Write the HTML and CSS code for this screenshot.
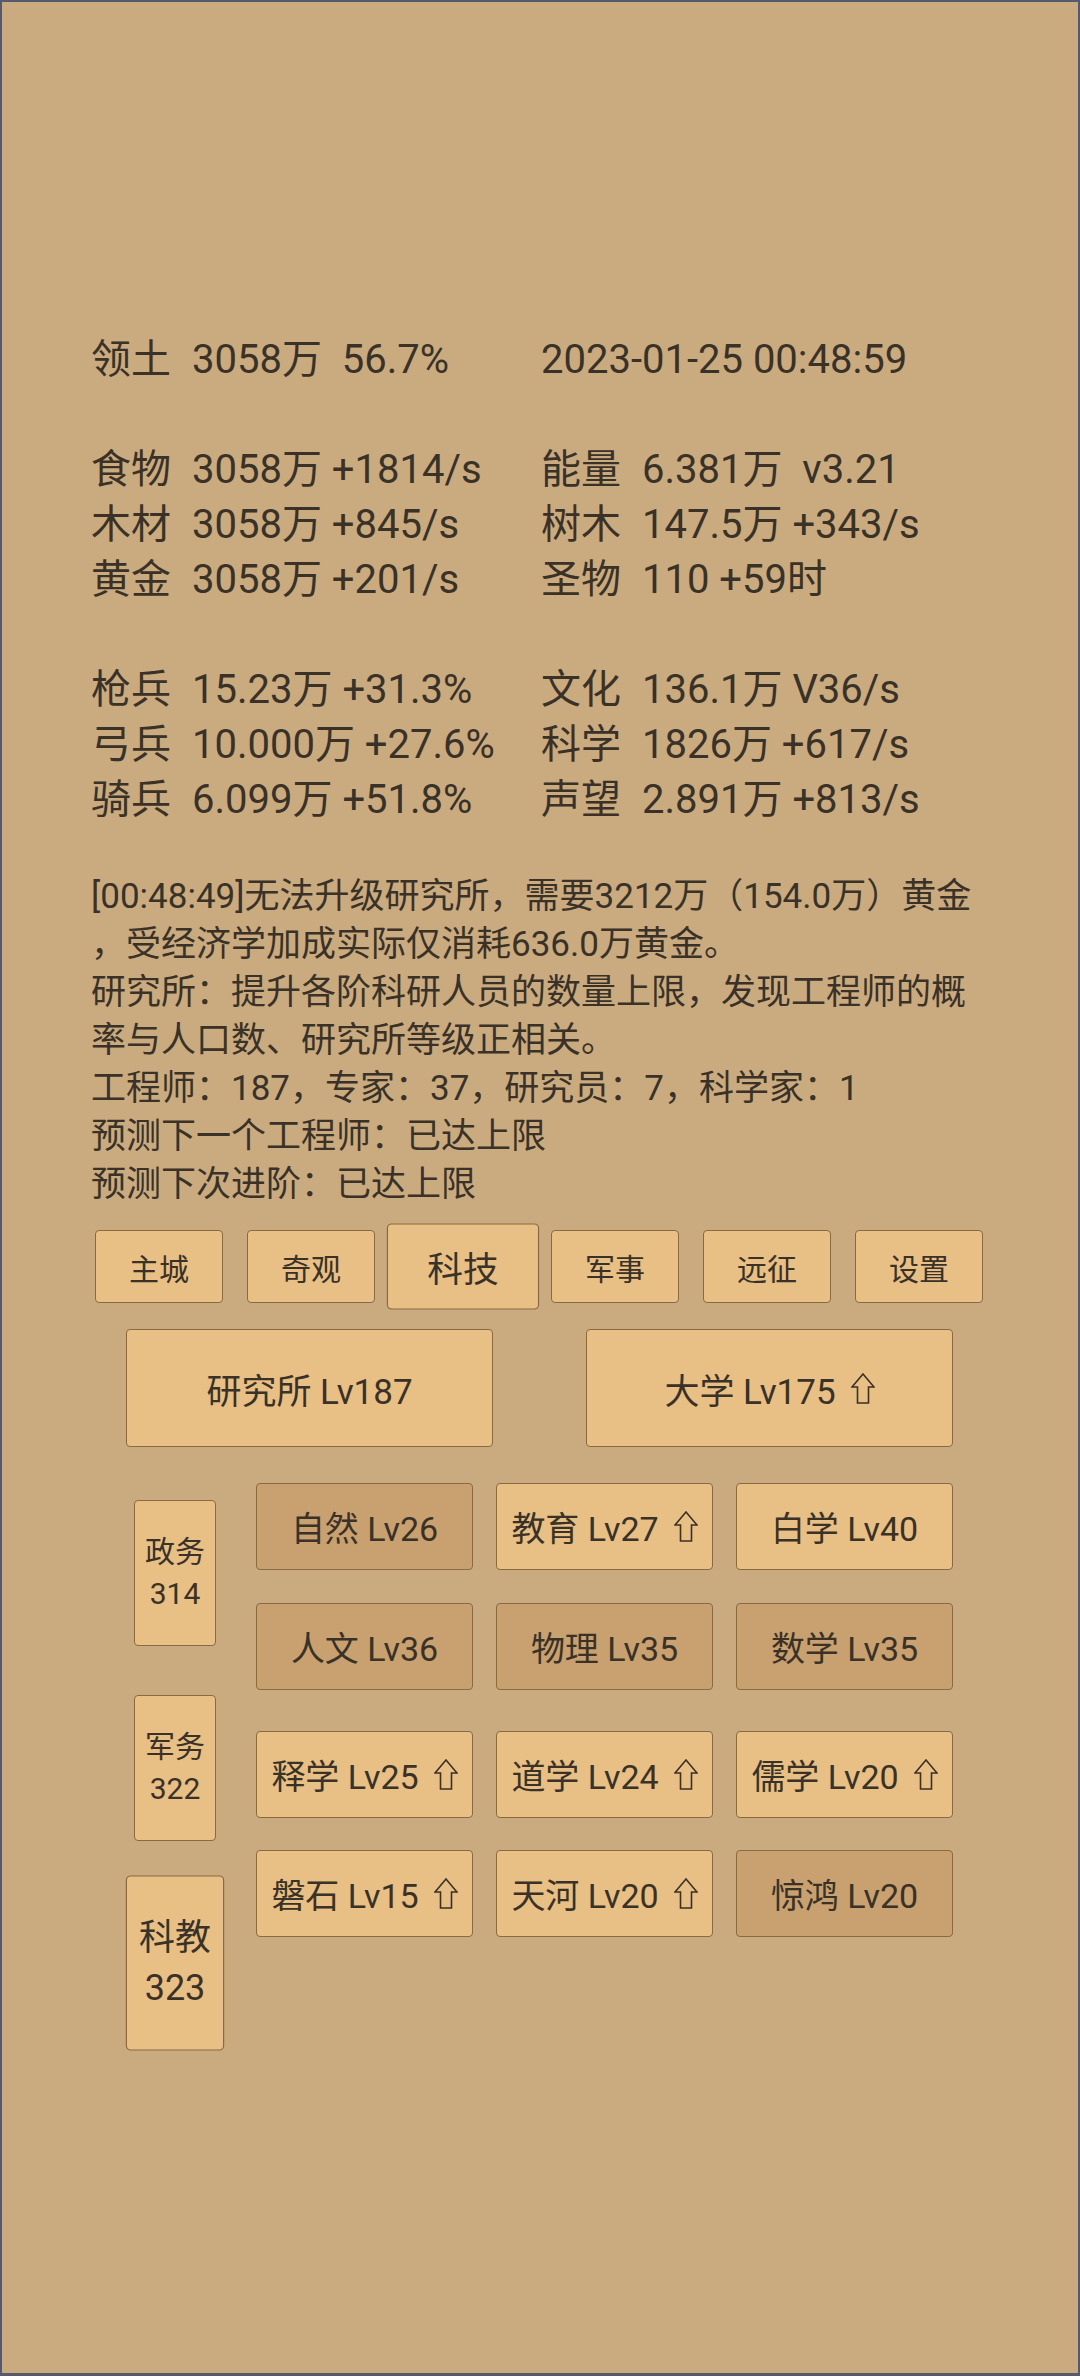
FILE: index.html
```html
<!DOCTYPE html>
<html lang="zh-CN">
<head>
<meta charset="utf-8">
<title>科技</title>
<link rel="stylesheet" href="styles.css">
</head>
<body>
<div class="page">
  <div class="stats">
    <span>领土</span><span>3058万  56.7%</span><span class="span2">2023-01-25 00:48:59</span>
    <span class="blank"></span>
    <span>食物</span><span>3058万 +1814/s</span><span>能量</span><span>6.381万  v3.21</span>
    <span>木材</span><span>3058万 +845/s</span><span>树木</span><span>147.5万 +343/s</span>
    <span>黄金</span><span>3058万 +201/s</span><span>圣物</span><span>110 +59时</span>
    <span class="blank"></span>
    <span>枪兵</span><span>15.23万 +31.3%</span><span>文化</span><span>136.1万 V36/s</span>
    <span>弓兵</span><span>10.000万 +27.6%</span><span>科学</span><span>1826万 +617/s</span>
    <span>骑兵</span><span>6.099万 +51.8%</span><span>声望</span><span>2.891万 +813/s</span>
  </div>

  <p class="log">[00:48:49]无法升级研究所，需要3212万（154.0万）黄金<br>，受经济学加成实际仅消耗636.0万黄金。<br>研究所：提升各阶科研人员的数量上限，发现工程师的概<br>率与人口数、研究所等级正相关。<br>工程师：187，专家：37，研究员：7，科学家：1<br>预测下一个工程师：已达上限<br>预测下次进阶：已达上限</p>

  <div class="nav">
    <div class="btn tab">主城</div>
    <div class="btn tab">奇观</div>
    <div class="btn tab active">科技</div>
    <div class="btn tab">军事</div>
    <div class="btn tab">远征</div>
    <div class="btn tab">设置</div>
  </div>

  <div class="big-row">
    <div class="btn big">研究所 Lv187</div>
    <div class="btn big">大学 Lv175<svg class="up" viewBox="0 0 24 31" width="24" height="31"><path d="M12 1 L23 14 L17.5 14 L17.5 30 L6.5 30 L6.5 14 L1 14 Z"/></svg></div>
  </div>

  <div class="lower">
    <div class="side">
      <div class="btn side-btn">政务<br>314</div>
      <div class="btn side-btn">军务<br>322</div>
      <div class="btn side-btn active">科教<br>323</div>
    </div>
    <div class="groups">
      <div class="group">
        <div class="btn cell dark">自然 Lv26</div>
        <div class="btn cell">教育 Lv27<svg class="up" viewBox="0 0 24 31" width="24" height="31"><path d="M12 1 L23 14 L17.5 14 L17.5 30 L6.5 30 L6.5 14 L1 14 Z"/></svg></div>
        <div class="btn cell">白学 Lv40</div>
        <div class="btn cell dark">人文 Lv36</div>
        <div class="btn cell dark">物理 Lv35</div>
        <div class="btn cell dark">数学 Lv35</div>
      </div>
      <div class="group">
        <div class="btn cell">释学 Lv25<svg class="up" viewBox="0 0 24 31" width="24" height="31"><path d="M12 1 L23 14 L17.5 14 L17.5 30 L6.5 30 L6.5 14 L1 14 Z"/></svg></div>
        <div class="btn cell">道学 Lv24<svg class="up" viewBox="0 0 24 31" width="24" height="31"><path d="M12 1 L23 14 L17.5 14 L17.5 30 L6.5 30 L6.5 14 L1 14 Z"/></svg></div>
        <div class="btn cell">儒学 Lv20<svg class="up" viewBox="0 0 24 31" width="24" height="31"><path d="M12 1 L23 14 L17.5 14 L17.5 30 L6.5 30 L6.5 14 L1 14 Z"/></svg></div>
        <div class="btn cell">磐石 Lv15<svg class="up" viewBox="0 0 24 31" width="24" height="31"><path d="M12 1 L23 14 L17.5 14 L17.5 30 L6.5 30 L6.5 14 L1 14 Z"/></svg></div>
        <div class="btn cell">天河 Lv20<svg class="up" viewBox="0 0 24 31" width="24" height="31"><path d="M12 1 L23 14 L17.5 14 L17.5 30 L6.5 30 L6.5 14 L1 14 Z"/></svg></div>
        <div class="btn cell dark">惊鸿 Lv20</div>
      </div>
    </div>
  </div>
</div>
</body>
</html>
```
FILE: styles.css
```css
html, body {
  margin: 0;
  padding: 0;
}

body {
  width: 1080px;
  height: 2376px;
  overflow: hidden;
}

.page {
  width: 1080px;
  height: 2376px;
  box-sizing: border-box;
  border: 2px solid #565a6e;
  border-bottom-width: 3px;
  background: #caab80;
  color: #3a3127;
  font-family: Roboto, "Noto Sans CJK SC", sans-serif;
  padding-top: 330px;
}

.stats {
  margin-left: 89px;
  display: grid;
  grid-template-columns: 101px 349px 101px 1fr;
  font-size: 40px;
  line-height: 55px;
  white-space: pre;
}

.stats .span2 {
  grid-column: span 2;
}

.stats .blank {
  grid-column: 1 / -1;
  height: 55px;
}

.log {
  margin: 46px 0 0 89px;
  font-size: 35px;
  line-height: 48px;
  white-space: nowrap;
}

.btn {
  box-sizing: border-box;
  background: #e8bf84;
  border: 1.5px solid #8a6a42;
  border-radius: 4px;
  display: flex;
  align-items: center;
  justify-content: center;
  text-align: center;
  white-space: nowrap;
}

.btn.dark {
  background: #c9a06f;
}

.up {
  flex: none;
  margin-left: 15px;
}

.up path {
  fill: none;
  stroke: #3a3127;
  stroke-width: 1.6;
}

.nav {
  margin: 21px 0 0 93px;
  display: flex;
  gap: 24px;
}

.tab {
  width: 128px;
  height: 73px;
  font-size: 30px;
}

.tab.active {
  transform: scale(1.19, 1.18);
}

.big-row {
  margin: 26px 0 0 124px;
  display: flex;
  gap: 93px;
}

.big {
  width: 367px;
  height: 118px;
  font-size: 35px;
}

.lower {
  margin: 36px 0 0 132px;
  display: flex;
}

.side {
  width: 82px;
  padding-top: 17px;
  display: flex;
  flex-direction: column;
  gap: 49px;
}

.side-btn {
  height: 146px;
  font-size: 30px;
  line-height: 42px;
}

.side-btn.active {
  transform: scale(1.2);
}

.groups {
  margin-left: 40px;
  display: flex;
  flex-direction: column;
  gap: 41px;
}

.group {
  display: grid;
  grid-template-columns: repeat(3, 217px);
  grid-auto-rows: 87px;
  column-gap: 23px;
  row-gap: 32.5px;
}

.cell {
  font-size: 34px;
}
```
